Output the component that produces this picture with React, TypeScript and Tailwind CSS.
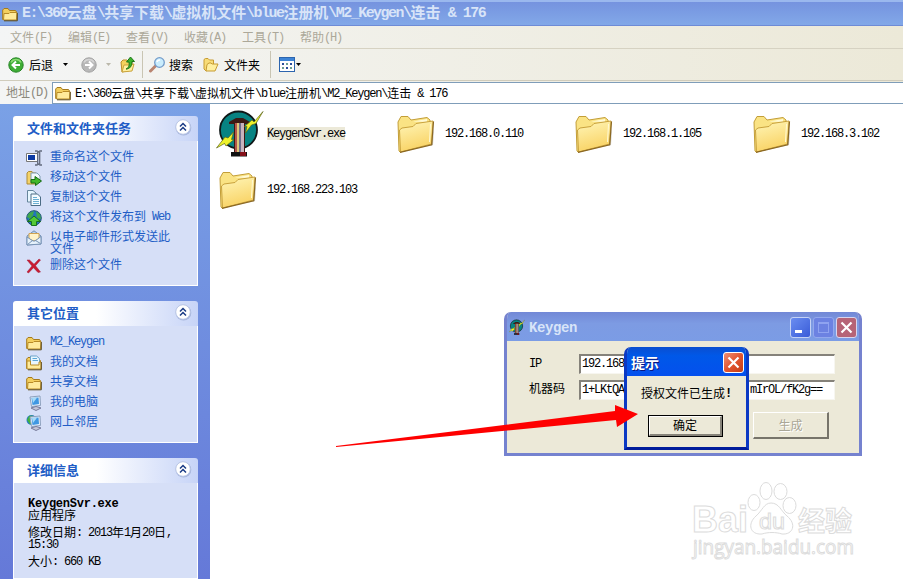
import type { ReactNode } from 'react';

const PATH = 'E:\\360云盘\\共享下载\\虚拟机文件\\blue注册机\\M2_Keygen\\连击 & 176';

// Half-width runs take half an em, like the system bitmap font
function T({ children, wide }: { children: string; wide?: boolean }) {
  const runs = children.match(/[\x00-\x7f]+|[^\x00-\x7f]+/g) ?? [];
  return (
    <>
      {runs.map((r, i) =>
        r.charCodeAt(0) < 128 ? (
          <span
            key={i}
            className={`relative -top-px leading-[0] whitespace-pre font-['Liberation_Mono',monospace] ${wide ? 'tracking-[-0.02em]' : 'tracking-[-0.1em]'}`}
          >
            {r}
          </span>
        ) : (
          <span key={i}>{r}</span>
        ),
      )}
    </>
  );
}

function SmallFolder({ size = 16, doc = false }: { size?: number; doc?: boolean }) {
  return (
    <svg width={size} height={size} viewBox="0 0 16 16" className="shrink-0">
      <path d="M.7 13.500V4L2 2.500H6L7.500 4.500H13.500L14.500 6V13Z" fill="#f3cf5e" stroke="#a57a1c" />
      {doc && <path d="M4.500 11V1H10.500L13.500 3.500V11Z" fill="#e8f6ff" stroke="#6da3c9" />}
      {doc && <path d="M6.500 3.500H11M6.500 5.500H12" stroke="#5ba7d8" />}
      <path
        d={doc ? 'M1 14V6H4.500V10H13V7H15V14Z' : 'M1.500 14L2 7.500H7L8 6.500H15L14.500 14Z'}
        fill="#ffeb9b"
        stroke="#b88b27"
      />
      <path d="M2 14.800H15.300V7" fill="none" stroke="#5d4a1c" />
    </svg>
  );
}

function RenameIcon() {
  return (
    <svg width="16" height="16" viewBox="0 0 16 16">
      <path d="M.5 3.500H11.500V11.500H.5Z" fill="#fff" stroke="#777" />
      <path d="M2 5H9V10H2Z" fill="#0c3aa4" />
      <path d="M9 1H11L12.500 2L14 1H16M11.700 2V14M13.700 2V14M9 15H11L12.500 14L14 15H16" fill="none" stroke="#626a7c" strokeWidth="1.300" />
    </svg>
  );
}

function MoveIcon() {
  return (
    <svg width="16" height="16" viewBox="0 0 16 16">
      <path d="M1 14V3L2.500 1.500H6L7 3H10V14Z" fill="#f4d269" stroke="#ad8b37" />
      <path d="M5 12V3H11L14 6V12Z" fill="#f1f8fc" stroke="#7e9db1" />
      <path d="M5 9.500H9V6.500L15.500 11L9.500 15.500V13H5Z" fill="#43b82b" stroke="#176d15" />
    </svg>
  );
}

function CopyIcon() {
  return (
    <svg width="16" height="16" viewBox="0 0 16 16">
      <path d="M1.500 12V.5H7L10 3V12Z" fill="#e7f6ff" stroke="#66859c" />
      <path d="M5 15.500V4H11.500L14.500 7V15.500Z" fill="#f4fbff" stroke="#4c6c85" />
      <path d="M7 7.500H11M7 9.500H13M7 11.500H13M7 13.500H13" stroke="#6bafd2" />
    </svg>
  );
}

function PublishIcon() {
  return (
    <svg width="16" height="16" viewBox="0 0 16 16">
      <circle cx="8" cy="8" r="7.3" fill="#2474bd" stroke="#20516f" />
      <path d="M1 7L3 3L8 1L7 5L4 9ZM10 1.500L14 4L15 9L11 8Z" fill="#3fa94b" />
      <path d="M8 6L14.500 11.500H10.500V15.500H5.500V11.500H1.500Z" fill="#54c936" stroke="#17711d" />
    </svg>
  );
}

function MailIcon() {
  return (
    <svg width="16" height="16" viewBox="0 0 16 16">
      <path d="M1 6L8 .8L15 6V14L1 15Z" fill="#b6d1ed" stroke="#6f8eb3" />
      <path d="M3 3.500H13V9L8 11L3 9Z" fill="#fff3c9" stroke="#d1a353" />
      <path d="M1 7L7 11H9L15 6.500V14L1 15Z" fill="#e6f2fc" stroke="#7893b5" />
      <path d="M1.500 14.500L6.500 10.500M14.500 13.500L9.500 10.500" stroke="#7893b5" />
    </svg>
  );
}

function DeleteIcon() {
  return (
    <svg width="16" height="16" viewBox="0 0 16 16">
      <path d="M1 2L3.500 2L8 6.200L13 1L14.500 2L9.500 7.700L14.500 14L12 14.500L7.500 9.700L2.500 15L1 14L6 8Z" fill="#c91b32" stroke="#a31d38" strokeWidth=".5" />
    </svg>
  );
}

function ComputerIcon({ globe = false }: { globe?: boolean }) {
  return (
    <svg width="16" height="16" viewBox="0 0 16 16">
      {globe && <circle cx="5.500" cy="5" r="5" fill="#2678c7" />}
      {globe && <path d="M1 5L3 1L7 .5L4.500 4L7 7L4 9.500Z" fill="#42b23f" />}
      <path d="M4 2L14 1L14.500 10.500L5.500 11.500Z" fill="#e2eefb" stroke="#8ca0bd" />
      <path d="M5.500 3L12.500 2.500L13 9L6.500 10Z" fill="#3f97e2" />
      <path d="M6 3L11 2.700L7 8Z" fill="#a5daf8" />
      <path d="M5 13L10 11.500L15 13L10 15.500Z" fill="#c5c7d9" stroke="#777b9b" />
    </svg>
  );
}

function KeygenIcon({ size }: { size: number }) {
  return (
    <svg width={size} height={size} viewBox="0 0 48 48" className="shrink-0">
      <circle cx="22.500" cy="21" r="18.500" fill="#078382" stroke="#101818" strokeWidth="1.800" />
      <path d="M13 13L20 9H27L34 13V15H29V43H18V15H13Z" fill="#3c1a14" />
      <path d="M19 14H21V43H19Z" fill="#b3564c" />
      <path d="M21 14H23V43H21Z" fill="#ddc778" />
      <path d="M23 14H25V43H23Z" fill="#6f6e8b" />
      <path d="M25 14H28V43H25Z" fill="#c9b3bd" />
      <path d="M15 43H31V47.500H15Z" fill="#111" />
      <path d="M24 43H30V47H24Z" fill="#841019" />
      <path d="M47 2.500L40 14.500L35.500 16L29.500 24L31 17.500H28.500L36 11L38 13Z" fill="#eef22b" stroke="#5d6519" strokeWidth=".7" />
      <path d="M.5 39L9 28L12 29L17.500 23L15.500 30.500H18L10 37L8.500 34.500Z" fill="#eef22b" stroke="#5d6519" strokeWidth=".7" />
    </svg>
  );
}

function BigFolder() {
  return (
    <svg width="48" height="48" viewBox="0 0 48 48" className="mt-[2px] shrink-0">
      <defs>
        <linearGradient id="front" x1="0" y1="0" x2=".3" y2="1">
          <stop offset="0" stopColor="#fff6b9" />
          <stop offset="1" stopColor="#f9d365" />
        </linearGradient>
      </defs>
      <path d="M7 42L39 35L40 16L37 35Z" fill="#8f8b82" opacity=".5" />
      <path d="M5 41L4 12L7 6.500H14L17 10L33 7.500L36 10L37 34L6 42Z" fill="#fae384" stroke="#c39e38" />
      <path d="M19 11.500L33 9V12Z" fill="#fffad6" />
      <path d="M6.500 42L5.500 20L8 18L19 16.500L22 13.500L39 11L37.500 34Z" fill="url(#front)" stroke="#c9a23d" />
      <path d="M6 42.400L37.700 34.800L39.500 11.500" fill="none" stroke="#8b6823" strokeWidth="1.200" />
      <path d="M36.500 14L35.500 32" stroke="#fffbd8" />
    </svg>
  );
}

const menus = ['文件(F)', '编辑(E)', '查看(V)', '收藏(A)', '工具(T)', '帮助(H)'];

function Caret({ faint = false }: { faint?: boolean }) {
  return (
    <svg width="5" height="3" viewBox="0 0 5 3" className="shrink-0">
      <path d="M0 0H5L2.500 3Z" fill={faint ? '#bbb8aa' : '#000'} />
    </svg>
  );
}

function RoundArrow({ forward = false }: { forward?: boolean }) {
  return (
    <svg width="16" height="16" viewBox="0 0 16 16" className={forward ? 'shrink-0 -scale-x-100' : 'shrink-0'}>
      <circle cx="8" cy="8" r="7.2" fill={forward ? '#b8b8b8' : '#3ead35'} stroke={forward ? '#a2a2a2' : '#258525'} />
      <path d="M3 5.500A5.500 5 0 0 1 13 5.500" fill="none" stroke={forward ? '#d5d5d5' : '#8bd974'} strokeWidth="1.5" />
      <path d="M12 8H4.500M8 4.500L4.500 8L8 11.500" fill="none" stroke="#fff" strokeWidth="2" />
    </svg>
  );
}

function Toolbar() {
  return (
    <div className="flex h-8 items-center border-b border-[#d0ccbc] pl-2 text-black">
      <RoundArrow />
      <span className="ml-[5px] w-6">后退</span>
      <span className="ml-[10px] flex"><Caret /></span>
      <span className="ml-[13px] flex"><RoundArrow forward /></span>
      <span className="ml-[9px] flex"><Caret faint /></span>
      <svg width="16" height="17" viewBox="0 0 16 17" className="ml-[9px]">
        <path d="M1 6L3 4H7L8 5H12V14L2 16Z" fill="#f4d25e" stroke="#b98d29" />
        <path d="M2 16L4 9H9L14 8L12 15Z" fill="#fff0a0" stroke="#caa33b" />
        <path d="M6 13C9 12 9.500 9 9 6H6.500L10.500 1L14.500 5.500H12C12 10 10 13 6 13Z" fill="#3bb52c" stroke="#1c7418" />
      </svg>
      <span className="ml-[6px] h-[27px] w-px bg-[#c9c5b3]" />
      <svg width="16" height="16" viewBox="0 0 16 16" className="ml-[6px]">
        <path d="M1.500 14L6.500 9" stroke="#b98470" strokeWidth="3" strokeLinecap="round" />
        <circle cx="10.500" cy="5.500" r="4.800" fill="#c9ecfd" stroke="#739cca" strokeWidth="1.300" />
        <path d="M8 5Q8.500 3 11 3" fill="none" stroke="#fff" strokeWidth="1.500" />
      </svg>
      <span className="ml-[4px] w-6">搜索</span>
      <svg width="16" height="16" viewBox="0 0 16 16" className="ml-[10px]">
        <path d="M1 12V2.500L2.500 1.500H5L6.500 3H10.500V9L3 14Z" fill="#f8dc77" stroke="#c69b32" />
        <path d="M3 14L4 7.500L6 6H8L9 7H15L12 14Z" fill="#ffef9f" stroke="#c69b32" />
      </svg>
      <span className="ml-[5px] w-9">文件夹</span>
      <span className="ml-[10px] h-[27px] w-px bg-[#c9c5b3]" />
      <svg width="16" height="15" viewBox="0 0 16 15" className="ml-2" shapeRendering="crispEdges">
        <path d="M.5 .5H15.500V14.500H.5Z" fill="#fff" stroke="#2d65ae" />
        <path d="M1 1H15V4H1Z" fill="#3d84d6" />
        <path d="M3 6H5V8H3ZM11 6H13V8H11ZM7 10H9V12H7Z" fill="#2c4e9b" />
        <path d="M7 6H9V8H7ZM3 10H5V12H3ZM11 10H13V12H11Z" fill="#6c9e91" />
      </svg>
      <span className="ml-px flex"><Caret /></span>
    </div>
  );
}

function Panel({ title, className, children }: { title: string; className: string; children: ReactNode }) {
  return (
    <section className={`w-[185px] shrink-0 ${className}`}>
      <div className="flex h-[25px] items-center justify-between rounded-t-[3px] bg-linear-to-r from-white from-45% to-[#c7d4f7] pr-[6px] pl-[14px]">
        <h2 className="-mt-[2px] text-[13px] leading-[16px] font-bold text-[#215dc6]">{title}</h2>
        <svg width="18" height="18" viewBox="0 0 18 18" className="-mt-[3px]">
          <circle cx="9.500" cy="9.800" r="7.800" fill="#8d9fcb" opacity=".6" />
          <circle cx="9" cy="9" r="7.300" fill="#fff" stroke="#b8c5e5" />
          <path d="M6 8.500L9 5.500L12 8.500M6 12.500L9 9.500L12 12.500" fill="none" stroke="#1b3c86" strokeWidth="1.500" />
        </svg>
      </div>
      <div className="h-[calc(100%-25px)] border border-t-0 border-white bg-[#d6dff7]">{children}</div>
    </section>
  );
}

function Task({ icon, children }: { icon: ReactNode; children: string }) {
  return (
    <li className="flex gap-2">
      <span className="-mb-1 h-4 w-4 shrink-0">{icon}</span>
      <span className="w-[126px] leading-[12px]"><T>{children}</T></span>
    </li>
  );
}

function Sidebar() {
  return (
    <aside className="flex w-[210px] shrink-0 flex-col gap-[15px] overflow-hidden bg-linear-to-b from-[#7aa1e6] to-[#6579d8] pt-3 pl-[13px]">
      <Panel title="文件和文件夹任务" className="h-[170px]">
        <ul className="flex flex-col gap-2 pt-[9px] pl-3 text-[#215dc6]">
          <Task icon={<RenameIcon />}>重命名这个文件</Task>
          <Task icon={<MoveIcon />}>移动这个文件</Task>
          <Task icon={<CopyIcon />}>复制这个文件</Task>
          <Task icon={<PublishIcon />}>将这个文件发布到 Web</Task>
          <div className="flex flex-col gap-1">
            <Task icon={<MailIcon />}>以电子邮件形式发送此文件</Task>
            <Task icon={<DeleteIcon />}>删除这个文件</Task>
          </div>
        </ul>
      </Panel>
      <Panel title="其它位置" className="h-[142px]">
        <ul className="flex flex-col gap-2 pt-[9px] pl-3 text-[#215dc6]">
          <Task icon={<SmallFolder />}>M2_Keygen</Task>
          <Task icon={<SmallFolder doc />}>我的文档</Task>
          <Task icon={<SmallFolder />}>共享文档</Task>
          <Task icon={<ComputerIcon />}>我的电脑</Task>
          <Task icon={<ComputerIcon globe />}>网上邻居</Task>
        </ul>
      </Panel>
      <Panel title="详细信息" className="h-[121px]">
        <div className="pt-[14px] pl-[14px] leading-[12px] text-black">
          <p className="font-bold"><T wide>KeygenSvr.exe</T></p>
          <p>应用程序</p>
          <p className="mt-[5px] w-[150px]"><T>修改日期: 2013年1月20日,</T></p>
          <p><T>15:30</T></p>
          <p className="mt-[5px]"><T>大小: 660 KB</T></p>
        </div>
      </Panel>
    </aside>
  );
}

const folders = ['192.168.0.110', '192.168.1.105', '192.168.3.102', '192.168.223.103'];

function Files() {
  return (
    <main className="grid flex-1 grid-cols-[repeat(4,178px)] content-start overflow-hidden bg-white pt-px pl-[6px] text-black">
      <div className="flex h-14 items-center gap-[3px]">
        <KeygenIcon size={48} />
        <span className="bg-[#ece9d8] pb-[2px] leading-[11px]"><T>KeygenSvr.exe</T></span>
      </div>
      {folders.map((f) => (
        <div key={f} className="flex h-14 items-center gap-[3px]">
          <BigFolder />
          <span className="pb-[2px] leading-[11px]"><T>{f}</T></span>
        </div>
      ))}
    </main>
  );
}

function Cross() {
  return (
    <svg width="13" height="13" viewBox="0 0 13 13">
      <path d="M1.500 1.500L11.500 11.500M11.500 1.500L1.500 11.500" stroke="#fff" strokeWidth="2.200" />
    </svg>
  );
}

function KeygenWindow() {
  return (
    <div className="absolute top-[312px] left-[504px] flex h-[144px] w-[358px] flex-col overflow-hidden rounded-t-[7px] border-[3px] border-t-0 border-[#7582cf] bg-[#ece9d8]">
      <div className="-mx-[3px] flex h-[29px] shrink-0 items-center bg-linear-to-b from-[#7288d6] via-[#7d9be3] via-40% to-[#7b9ce5] pr-[5px] pl-[5px]">
        <KeygenIcon size={16} />
        <span className="ml-1 flex-1 pt-[2px] font-['Liberation_Mono',monospace] text-[14px] leading-4 font-bold tracking-[-0.03em] text-[#d8e4f8]">
          Keygen
        </span>
        <div className="flex gap-[2px] pt-[2px]">
          <span className="flex size-[21px] items-end rounded-[3px] border border-[#c4d2f5] bg-linear-to-br from-[#6b8df0] to-[#3a5bd8] p-1">
            <span className="h-[3px] w-[7px] bg-white" />
          </span>
          <span className="flex size-[21px] items-center justify-center rounded-[3px] border border-[#93a8ed] bg-[#6c82e2]">
            <span className="size-[11px] border border-t-2 border-[#8fa3f0]" />
          </span>
          <span className="flex size-[21px] items-center justify-center rounded-[3px] border border-[#d8d5ee] bg-[#b66477]"><Cross /></span>
        </div>
      </div>
      <div className="grid grid-cols-[50px_256px] gap-y-[6px] pt-[13px] pl-[22px] text-black">
        <span className="leading-[18px]"><T>IP</T></span>
        <div className="h-5 border border-t-2 border-l-2 border-[#f7f6f0] border-t-[#85827a] border-l-[#85827a] bg-white pl-px leading-[14px]"><T>192.168</T></div>
        <span className="leading-[16px]">机器码</span>
        <div className="flex h-5 justify-between border border-t-2 border-l-2 border-[#f7f6f0] border-t-[#85827a] border-l-[#85827a] bg-white pr-3 pl-px leading-[14px]">
          <span><T>1+LKtQA</T></span>
          <span><T>mIrOL/fK2g==</T></span>
        </div>
      </div>
      <div className="mt-[12px] mr-[30px] flex h-[27px] w-[76px] items-center justify-center self-end border border-r-2 border-b-2 border-white border-r-[#77746a] border-b-[#77746a] text-[#aaa798] [text-shadow:1px_1px_white]">
        生成
      </div>
    </div>
  );
}

function Dialog() {
  return (
    <div className="absolute top-[347px] left-[624px] flex h-[103px] w-[125px] flex-col overflow-hidden rounded-t-[7px] border-[3px] border-t-0 border-[#0b39c4] border-b-[#001c9b] bg-[#ece9d8]">
      <div className="-mx-[3px] flex h-[29px] shrink-0 items-center justify-between bg-linear-to-b from-[#0a4ed0] via-[#0058e8] via-30% to-[#0550ee] pr-[5px] pl-[7px]">
        <span className="text-[14px] leading-4 font-bold text-white [text-shadow:1px_1px_#0a1883]">提示</span>
        <span className="mt-[2px] flex size-[21px] items-center justify-center rounded-[3px] border border-white bg-linear-to-br from-[#ed8e72] via-[#e2552f] to-[#c43c14]"><Cross /></span>
      </div>
      <p className="mt-[10px] pl-[14px] leading-[14px] whitespace-nowrap text-black">
        <T>授权文件已生成</T>
        <b><T>!</T></b>
      </p>
      <div className="mt-[15px] ml-[21px] h-[22px] w-[75px] shrink-0 border border-black">
        <div className="flex h-full items-center justify-center border border-r-2 border-b-2 border-white border-r-[#87847a] border-b-[#87847a] pb-px text-black">确定</div>
      </div>
    </div>
  );
}

function Watermark() {
  return (
    <svg className="absolute top-[478px] left-[688px]" width="175" height="90" viewBox="0 0 175 90" fill="#fff" stroke="#dcdcdc">
      <g fontFamily="Liberation Sans, sans-serif" strokeWidth="1">
        <text x="4" y="54" fontSize="36" fontWeight="700" textLength="56" lengthAdjust="spacingAndGlyphs">Bai</text>
        <ellipse cx="66" cy="24.500" rx="6" ry="8" />
        <ellipse cx="78" cy="13" rx="6" ry="8.500" />
        <ellipse cx="92.500" cy="13.500" rx="6.500" ry="8" />
        <ellipse cx="101.500" cy="27.500" rx="6.500" ry="8" />
        <path d="M83 25C91 25 93 33 99 38C109 46 105 57 94 56C88 54 80 54 74 56C62 57 59 46 68 38C74 33 76 25 83 25Z" />
        <text x="71" y="51" fontSize="22" textLength="26" lengthAdjust="spacingAndGlyphs">du</text>
        <text x="110" y="53" fontSize="27" fontWeight="700" fontFamily="Noto Sans CJK SC, sans-serif">经验</text>
        <text x="5" y="76" fontSize="20" textLength="161" lengthAdjust="spacingAndGlyphs" fontFamily="Open Sans, sans-serif">jingyan.baidu.com</text>
      </g>
    </svg>
  );
}

export default function App() {
  return (
    <div className="relative flex h-[579px] w-[903px] flex-col overflow-hidden bg-white font-['Noto_Sans_CJK_SC',sans-serif] text-[12px] leading-[14px]">
      <header className="flex h-[26px] shrink-0 items-center gap-1 border-t-2 border-b border-t-[#9ab8ee] border-b-[#6e8bd6] bg-linear-to-b from-[#7593df] to-[#82a8e8] pl-[2px]">
        <SmallFolder />
        <span className="-mt-[3px] text-[14.95px] leading-5 font-bold whitespace-nowrap text-[#d8e4f8]"><T>{PATH}</T></span>
      </header>
      <div className="shrink-0 bg-linear-to-r from-[#f4f5f5] to-[#ece9d8]">
        <nav className="flex h-[23px] items-center border-b border-[#d6d2c2] pl-[10px] text-[#aca899]">
          {menus.map((m) => (
            <span key={m} className="w-[58px]"><T>{m}</T></span>
          ))}
        </nav>
        <Toolbar />
        <div className="flex h-[23px] items-stretch">
          <span className="w-[52px] pt-[4px] pl-[6px] text-[#8b887b]"><T>地址(D)</T></span>
          <div className="mt-px flex flex-1 items-center gap-1 border border-r-0 border-[#7f9db9] bg-white pl-[2px] whitespace-nowrap text-black">
            <SmallFolder />
            <span><T>{PATH}</T></span>
          </div>
        </div>
      </div>
      <div className="flex min-h-0 flex-1">
        <Sidebar />
        <Files />
      </div>
      <KeygenWindow />
      <Dialog />
      <svg className="absolute top-[400px] left-[330px]" width="315" height="50" viewBox="330 400 315 50">
        <path d="M336 446L615 411L615 405L638 414L617 427L616 420L336 447Z" fill="#fe0000" />
      </svg>
      <Watermark />
    </div>
  );
}
